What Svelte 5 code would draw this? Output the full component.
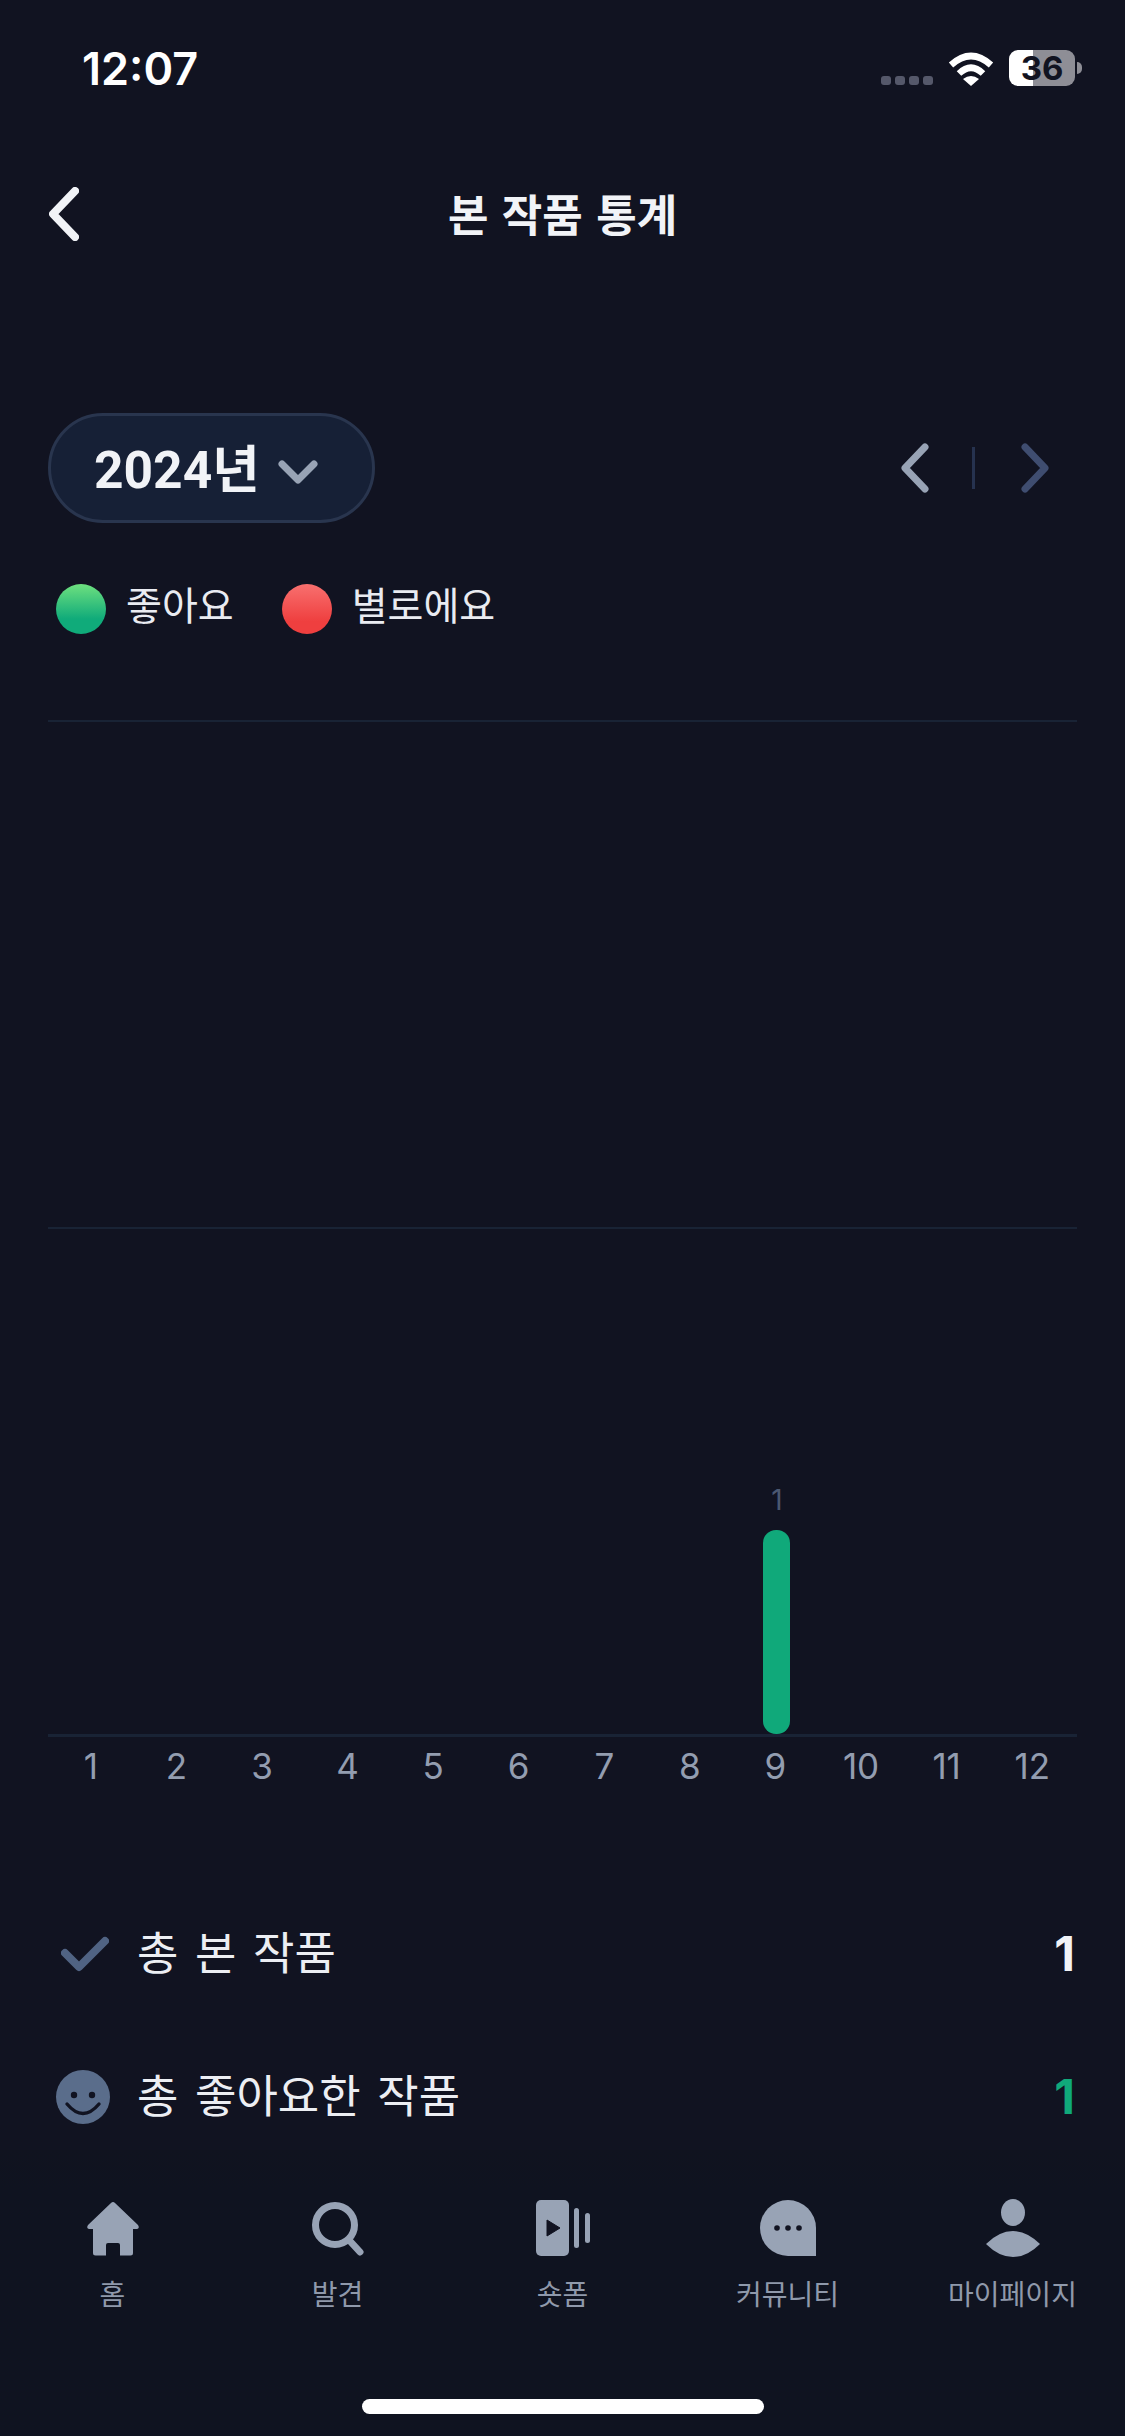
<script>
  // Yearly stats for watched titles: liked / disliked counts per month.
  const months = [0, 0, 0, 0, 0, 0, 0, 0, 1, 0, 0, 0];
  const barHeight = 204; // px per title

  const tabs = [
    { id: 'home', label: '홈' },
    { id: 'search', label: '발견' },
    { id: 'shorts', label: '숏폼' },
    { id: 'community', label: '커뮤니티' },
    { id: 'my', label: '마이페이지' }
  ];
</script>

<div class="screen">
  <div class="status">
    <span class="time">12:07</span>
    <div class="status-icons">
      <div class="signal"><i></i><i></i><i></i><i></i></div>
      <svg class="wifi" width="46" height="34" viewBox="0 0 46 34">
        <path d="M3 13 Q23 -5 43 13" fill="none" stroke="#fff" stroke-width="6.5" />
        <path d="M11 21.500 Q23 10 35 21.500" fill="none" stroke="#fff" stroke-width="6.500" />
        <path d="M15 27 Q23 21 31 27 L23 34 Z" fill="#fff" />
      </svg>
      <div class="battery"><span>36</span></div>
      <div class="battery-nub"></div>
    </div>
  </div>

  <header class="topbar">
    <svg class="back" width="30" height="54" viewBox="0 0 30 54">
      <path d="M26 4 L4 27 L26 50" fill="none" stroke="#f1f3f7" stroke-width="8" stroke-linecap="round" stroke-linejoin="round" />
    </svg>
    <h1>본 작품 통계</h1>
  </header>

  <div class="controls">
    <button class="year">
      <span>2024년</span>
      <svg width="40" height="24" viewBox="0 0 40 24">
        <path d="M4 4 L20 20 L36 4" fill="none" stroke="#98a3b5" stroke-width="7" stroke-linecap="round" stroke-linejoin="round" />
      </svg>
    </button>
    <div class="pager">
      <svg width="28" height="50" viewBox="0 0 28 50">
        <path d="M24 4 L4 25 L24 46" fill="none" stroke="#98a3b5" stroke-width="7" stroke-linecap="round" stroke-linejoin="round" />
      </svg>
      <i class="pager-sep"></i>
      <svg width="28" height="50" viewBox="0 0 28 50">
        <path d="M4 4 L24 25 L4 46" fill="none" stroke="#3f4d70" stroke-width="7" stroke-linecap="round" stroke-linejoin="round" />
      </svg>
    </div>
  </div>

  <div class="legend">
    <div class="legend-item"><i class="dot good"></i><span>좋아요</span></div>
    <div class="legend-item"><i class="dot bad"></i><span>별로에요</span></div>
  </div>

  <div class="chart">
    <div class="plot">
      <div class="band"></div>
      <div class="band"></div>
      <div class="bars">
        {#each months as count}
          <div class="col">
            {#if count > 0}
              <span class="count">{count}</span>
              <div class="bar" style="height: {count * barHeight}px"></div>
            {/if}
          </div>
        {/each}
      </div>
    </div>
    <div class="months">
      {#each months as _, i}
        <span>{i + 1}</span>
      {/each}
    </div>
  </div>

  <div class="stats">
    <div class="stat">
      <div class="stat-icon">
        <svg width="48" height="36" viewBox="0 0 48 36">
          <path d="M4 17 L18 31 L44 5" fill="none" stroke="#506383" stroke-width="8" stroke-linecap="round" stroke-linejoin="round" />
        </svg>
      </div>
      <span class="stat-label">총 본 작품</span>
      <b>1</b>
    </div>
    <div class="stat">
      <div class="stat-icon">
        <svg width="54" height="54" viewBox="0 0 54 54">
          <circle cx="27" cy="27" r="27" fill="#5a6d8b" />
          <circle cx="18" cy="25" r="3.200" fill="#111321" />
          <circle cx="36" cy="25" r="3.200" fill="#111321" />
          <path d="M11 34 Q27 53 43 34" fill="none" stroke="#111321" stroke-width="3.400" stroke-linecap="round" />
        </svg>
      </div>
      <span class="stat-label">총 좋아요한 작품</span>
      <b class="green">1</b>
    </div>
  </div>

  <nav class="tabbar">
    <div class="tabs">
      {#each tabs as tab}
        <div class="tab">
          <div class="tab-icon">
            {#if tab.id === 'home'}
              <svg width="54" height="56" viewBox="0 0 54 56">
                <path d="M27 2 Q28 2 29 3 L52 25 Q54 28 51 29 L47 29 L47 53 Q47 55.500 44.500 55.500 L34 55.500 L34 45 Q34 43 32 43 L22 43 Q20 43 20 45 L20 55.500 L9.500 55.500 Q7 55.500 7 53 L7 29 L3 29 Q0 28 2 25 L25 3 Q26 2 27 2 Z" fill="#98a3b5" />
              </svg>
            {:else if tab.id === 'search'}
              <svg width="54" height="56" viewBox="0 0 54 56">
                <circle cx="24" cy="25" r="19.500" fill="none" stroke="#98a3b5" stroke-width="7" />
                <path d="M38 40 L49 52" fill="none" stroke="#98a3b5" stroke-width="7" stroke-linecap="round" />
              </svg>
            {:else if tab.id === 'shorts'}
              <svg width="54" height="56" viewBox="0 0 54 56">
                <rect x="0" y="0" width="33" height="56" rx="5" fill="#98a3b5" />
                <path d="M11 20 L24 28 L11 36 Z" fill="#111321" stroke="#111321" stroke-width="1" stroke-linejoin="round" />
                <rect x="38" y="8" width="5" height="40" rx="2.500" fill="#98a3b5" />
                <rect x="49" y="13" width="5" height="30" rx="2.500" fill="#98a3b5" />
              </svg>
            {:else if tab.id === 'community'}
              <svg width="56" height="56" viewBox="0 0 56 56">
                <path d="M28 0 A28 28 0 0 1 56 28 L56 56 L28 56 A28 28 0 0 1 28 0 Z" fill="#98a3b5" />
                <circle cx="17" cy="28" r="2.800" fill="#111321" />
                <circle cx="28" cy="28" r="2.800" fill="#111321" />
                <circle cx="39" cy="28" r="2.800" fill="#111321" />
              </svg>
            {:else}
              <svg width="54" height="58" viewBox="0 0 54 58">
                <ellipse cx="27" cy="13.500" rx="12" ry="13.500" fill="#98a3b5" />
                <path d="M0 45 Q13 32 27 32 Q41 32 54 45 Q41 58 27 58 Q13 58 0 45 Z" fill="#98a3b5" />
              </svg>
            {/if}
          </div>
          <span>{tab.label}</span>
        </div>
      {/each}
    </div>
    <div class="home-bar"></div>
  </nav>
</div>

<style>
  :global(body) {
    margin: 0;
    background: #111321;
  }

  .screen {
    width: 1125px;
    height: 2436px;
    display: flex;
    flex-direction: column;
    overflow: hidden;
    background: #111321;
    color: #f1f3f7;
    font-family: Inter, "Noto Sans CJK KR", sans-serif;
  }

  /* status bar */
  .status {
    height: 136px;
    flex: none;
    display: flex;
    align-items: center;
    justify-content: space-between;
    padding: 0 43px 0 82px;
    box-sizing: border-box;
  }
  .time {
    font-size: 45px;
    font-weight: 600;
    color: #fff;
    line-height: 1;
  }
  .status-icons {
    display: flex;
    align-items: center;
    height: 40px;
  }
  .signal {
    display: flex;
    gap: 4px;
    align-self: flex-end;
    margin-bottom: 3px;
    margin-right: 15px;
  }
  .signal i {
    width: 10px;
    height: 9px;
    border-radius: 3px;
    background: #55586a;
  }
  .wifi {
    margin-right: 15px;
    margin-top: 1px;
  }
  .battery {
    width: 66px;
    height: 36px;
    border-radius: 9px;
    background: linear-gradient(90deg, #fff 0 36%, #8e8e96 36% 100%);
    display: flex;
    align-items: center;
    justify-content: center;
    color: #111321;
    font-size: 33px;
    font-weight: 700;
    line-height: 1;
  }
  .battery-nub {
    width: 5px;
    height: 12px;
    margin-left: 2px;
    border-radius: 0 6px 6px 0;
    background: #8e8e96;
  }

  /* title row */
  .topbar {
    height: 156px;
    flex: none;
    position: relative;
    display: flex;
    align-items: center;
    justify-content: center;
  }
  .back {
    position: absolute;
    left: 49px;
    top: 51px;
  }
  h1 {
    margin: 4px 0 0;
    font-size: 44px;
    font-weight: 700;
    line-height: 1.2;
    word-spacing: 3px;
  }

  /* year picker and pager */
  .controls {
    margin-top: 121px;
    padding: 0 48px;
    display: flex;
    align-items: center;
    justify-content: space-between;
  }
  .year {
    width: 327px;
    height: 110px;
    box-sizing: border-box;
    padding: 0 0 6px 43px;
    display: flex;
    align-items: center;
    gap: 18px;
    border: 3px solid #29354e;
    border-radius: 55px;
    background: #162036;
    color: #f1f3f7;
    font-family: Roboto, "Noto Sans CJK KR", sans-serif;
    font-size: 51.500px;
    font-weight: 700;
  }
  .year svg {
    margin-top: 14px;
  }
  .pager {
    display: flex;
    align-items: center;
    margin-right: 28px;
  }
  .pager-sep {
    width: 3px;
    height: 42px;
    margin: 0 46px 0 43px;
    background: #26324f;
  }

  /* legend */
  .legend {
    margin-top: 61px;
    padding-left: 56px;
    display: flex;
    gap: 48px;
  }
  .legend-item {
    display: flex;
    align-items: center;
    gap: 20px;
    font-size: 39px;
    line-height: 50px;
    height: 50px;
    color: #e9ebf1;
  }
  .legend-item span {
    margin-top: -6px;
  }
  .dot {
    width: 50px;
    height: 50px;
    border-radius: 50%;
  }
  .dot.good {
    background: linear-gradient(#6ee07f, #10ab7a 70%);
  }
  .dot.bad {
    background: linear-gradient(#f8706f, #ef3f3f 75%);
  }

  /* monthly chart */
  .chart {
    margin: 86px 48px 0;
  }
  .plot {
    position: relative;
    border-bottom: 3px solid #192335;
  }
  .band {
    height: 505px;
    border-top: 2px solid #192335;
  }
  .bars {
    position: absolute;
    inset: 0;
    display: grid;
    grid-template-columns: repeat(12, 1fr);
    align-items: end;
  }
  .col {
    display: flex;
    flex-direction: column;
    align-items: center;
  }
  .count {
    font-size: 28px;
    line-height: 34px;
    margin-bottom: 13px;
    color: #4b5871;
  }
  .bar {
    width: 27px;
    border-radius: 13px;
    background: #10a97a;
  }
  .months {
    display: grid;
    grid-template-columns: repeat(12, 1fr);
    margin-top: 7px;
    padding-right: 2px;
    font-size: 35px;
    line-height: 44px;
    text-align: center;
    color: #939db0;
  }

  /* totals */
  .stats {
    margin-top: 136px;
    padding: 0 48px 0 56px;
    display: flex;
    flex-direction: column;
    gap: 83px;
  }
  .stat {
    height: 60px;
    display: flex;
    align-items: center;
  }
  .stat-icon {
    width: 81px;
    flex: none;
    display: flex;
    justify-content: flex-start;
  }
  .stat-icon svg {
    display: block;
  }
  .stat:first-child .stat-icon svg {
    margin-left: 5px;
  }
  .stat-label {
    flex: 1;
    font-size: 45px;
    line-height: 60px;
    word-spacing: 4px;
    color: #eceef3;
  }
  .stat b {
    font-size: 48px;
    font-weight: 700;
    line-height: 60px;
    margin-right: 2px;
  }
  .stat b.green {
    color: #10a97a;
  }

  /* bottom navigation */
  .tabbar {
    margin-top: auto;
    height: 286px;
    flex: none;
    display: flex;
    flex-direction: column;
    align-items: center;
    background: linear-gradient(#10131f 0, #0f1320 40px);
  }
  .tabs {
    align-self: stretch;
    display: grid;
    grid-template-columns: repeat(5, 1fr);
    padding-top: 49px;
  }
  .tab {
    display: flex;
    flex-direction: column;
    align-items: center;
    font-size: 28px;
    line-height: 36px;
    color: #8f99ab;
  }
  .tab-icon {
    height: 58px;
    margin-bottom: 20px;
    display: flex;
    align-items: center;
  }
  .tab-icon svg {
    display: block;
  }
  .home-bar {
    width: 402px;
    height: 15px;
    margin-top: 86px;
    border-radius: 8px;
    background: #fff;
  }
</style>
